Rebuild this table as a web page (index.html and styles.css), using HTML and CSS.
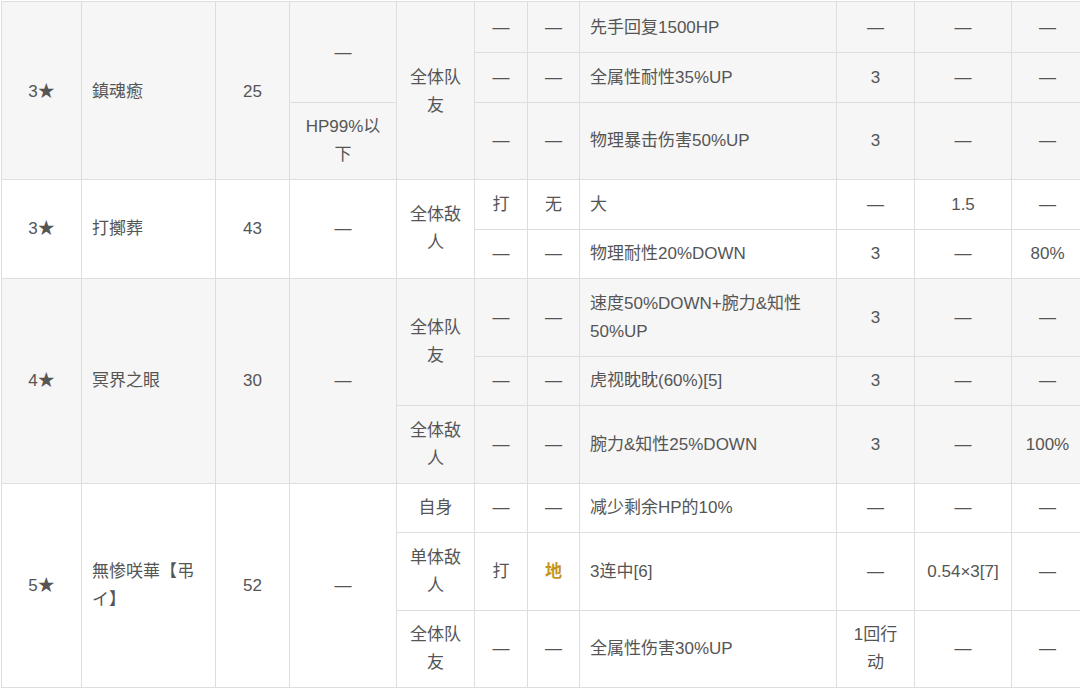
FILE: index.html
```html
<!DOCTYPE html>
<html lang="zh-CN">
<head>
<meta charset="utf-8">
<title>技能表</title>
<link rel="stylesheet" href="styles.css">
</head>
<body>
<div class="wrap">
<table class="skills">
  <colgroup>
    <col class="c-rank"><col class="c-name"><col class="c-cost"><col class="c-cond"><col class="c-target">
    <col class="c-type"><col class="c-elem"><col class="c-effect"><col class="c-turn"><col class="c-power"><col class="c-rate">
  </colgroup>
  <tbody class="g-alt">
    <tr class="first">
      <td rowspan="3">3★</td>
      <td rowspan="3" class="left">鎮魂癒</td>
      <td rowspan="3">25</td>
      <td rowspan="2">—</td>
      <td rowspan="3">全体队友</td>
      <td>—</td><td>—</td><td class="left">先手回复1500HP</td><td>—</td><td>—</td><td>—</td>
    </tr>
    <tr>
      <td>—</td><td>—</td><td class="left">全属性耐性35%UP</td><td>3</td><td>—</td><td>—</td>
    </tr>
    <tr>
      <td>HP99%以下</td>
      <td>—</td><td>—</td><td class="left">物理暴击伤害50%UP</td><td>3</td><td>—</td><td>—</td>
    </tr>
  </tbody>
  <tbody>
    <tr>
      <td rowspan="2">3★</td>
      <td rowspan="2" class="left">打擲葬</td>
      <td rowspan="2">43</td>
      <td rowspan="2">—</td>
      <td rowspan="2">全体敌人</td>
      <td>打</td><td>无</td><td class="left">大</td><td>—</td><td>1.5</td><td>—</td>
    </tr>
    <tr>
      <td>—</td><td>—</td><td class="left">物理耐性20%DOWN</td><td>3</td><td>—</td><td>80%</td>
    </tr>
  </tbody>
  <tbody class="g-alt">
    <tr>
      <td rowspan="3">4★</td>
      <td rowspan="3" class="left">冥界之眼</td>
      <td rowspan="3">30</td>
      <td rowspan="3">—</td>
      <td rowspan="2">全体队友</td>
      <td>—</td><td>—</td><td class="left">速度50%DOWN+腕力&amp;知性50%UP</td><td>3</td><td>—</td><td>—</td>
    </tr>
    <tr>
      <td>—</td><td>—</td><td class="left">虎视眈眈(60%)[5]</td><td>3</td><td>—</td><td>—</td>
    </tr>
    <tr>
      <td>全体敌人</td>
      <td>—</td><td>—</td><td class="left">腕力&amp;知性25%DOWN</td><td>3</td><td>—</td><td>100%</td>
    </tr>
  </tbody>
  <tbody>
    <tr>
      <td rowspan="3">5★</td>
      <td rowspan="3" class="left">無惨咲華【弔イ】</td>
      <td rowspan="3">52</td>
      <td rowspan="3">—</td>
      <td>自身</td>
      <td>—</td><td>—</td><td class="left">减少剩余HP的10%</td><td>—</td><td>—</td><td>—</td>
    </tr>
    <tr>
      <td>单体敌人</td>
      <td>打</td><td><span class="earth">地</span></td><td class="left">3连中[6]</td><td>—</td><td>0.54×3[7]</td><td>—</td>
    </tr>
    <tr>
      <td>全体队友</td>
      <td>—</td><td>—</td><td class="left">全属性伤害30%UP</td><td>1回行动</td><td>—</td><td>—</td>
    </tr>
  </tbody>
</table>
</div>
</body>
</html>
```
FILE: styles.css
```css
html, body {
  margin: 0;
  padding: 0;
  background: #ffffff;
  overflow: hidden;
}
.wrap {
  padding: 1px 0 0 1px;
}
.skills {
  border-collapse: collapse;
  table-layout: fixed;
  width: 1082px;
  font-family: "Liberation Sans", "Noto Sans CJK SC", sans-serif;
  font-size: 17px;
  line-height: 28px;
  color: #555555;
}
.skills td {
  border: 1px solid #dedede;
  padding: 10.25px 10px;
  text-align: center;
  vertical-align: middle;
}
.skills tr.first td {
  padding-top: 12px;
}
.skills td.left {
  text-align: left;
}
.g-alt td {
  background: #f6f6f6;
}
.earth {
  color: #c4951f;
  font-weight: bold;
}
.c-rank { width: 80px; }
.c-name { width: 134px; }
.c-cost { width: 74px; }
.c-cond { width: 107px; }
.c-target { width: 78px; }
.c-type { width: 53px; }
.c-elem { width: 52px; }
.c-effect { width: 257px; }
.c-turn { width: 78px; }
.c-power { width: 97px; }
.c-rate { width: 72px; }
```
